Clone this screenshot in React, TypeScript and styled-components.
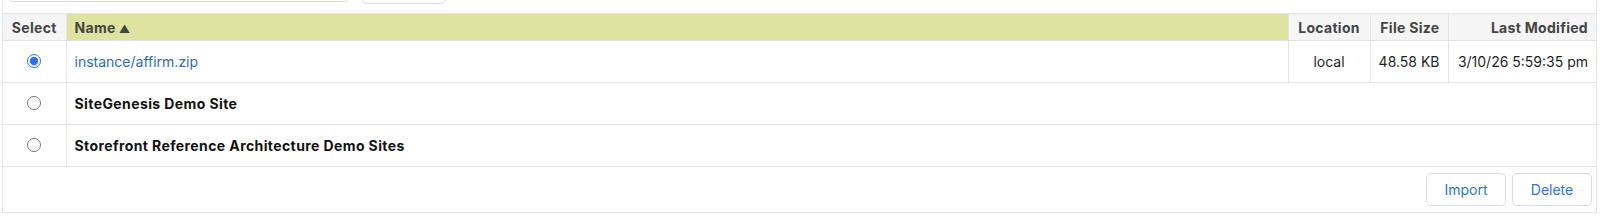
import React, { useState } from 'react'
import styled, { createGlobalStyle } from 'styled-components'

const GlobalStyle = createGlobalStyle`
	body {
		margin: 0;
		background: #fff;
		font-family: Inter, "Liberation Sans", Arial, sans-serif;
		font-size: 14px;
		color: #222;
	}
`

const Panel = styled.div`
	margin: 0 7px 0 2px;
	border: 1px solid #e3e3e3;
	border-top: none;
	background: #fff;
`

const Toolbar = styled.div`
	display: flex;
	align-items: flex-end;
	gap: 11px;
	height: 13px;
	overflow: hidden;
	padding-left: 5px;
`

const Search = styled.div`
	width: 342px;
	height: 28px;
	margin-bottom: 11px;
	border: 1px solid #dcdcdc;
	border-radius: 5px;
	box-sizing: border-box;
	flex: none;
`

const ToolButton = styled.div`
	width: 85px;
	height: 28px;
	margin-bottom: 9px;
	border: 1px solid #dcdcdc;
	border-radius: 5px;
	box-sizing: border-box;
	flex: none;
`

const Table = styled.table`
	width: 100%;
	border-collapse: collapse;
	table-layout: fixed;
`

const Th = styled.th<{ $align?: string; $sorted?: boolean }>`
	height: 26px;
	padding: 0 8px;
	background: ${p => (p.$sorted ? '#dee3a0' : '#f5f5f5')};
	color: #454545;
	font-weight: 700;
	font-size: 14px;
	letter-spacing: 0.3px;
	text-align: ${p => p.$align || 'left'};
	border-top: 1px solid #e3e3e3;
	border-bottom: 1px solid #e3e3e3;
	border-left: 1px solid #e3e3e3;
	white-space: nowrap;
	&:first-child {
		border-left: none;
	}
`

const SortArrow = styled.span`
	font-size: 11px;
	margin-left: 3px;
`

const Td = styled.td<{ $align?: string }>`
	height: 41px;
	padding: 0 8px;
	text-align: ${p => p.$align || 'left'};
	border-bottom: 1px solid #e3e3e3;
	border-left: 1px solid #e3e3e3;
	color: #1f1f1f;
	white-space: nowrap;
	&:first-child {
		border-left: none;
	}
`

const SelectCell = styled(Td)`
	height: 36px;
	text-align: center;
	padding: 0 0 5px;
`

const Radio = styled.input.attrs({ type: 'radio' })`
	margin: 0;
	width: 14px;
	height: 14px;
	accent-color: #2f6fe8;
	vertical-align: middle;
`

const FileLink = styled.a`
	color: #2d6cb0;
	text-decoration: none;
`

const SiteName = styled.span`
	font-weight: 700;
	letter-spacing: 0.4px;
	color: #111;
`

const Footer = styled.div`
	display: flex;
	justify-content: flex-end;
	gap: 6px;
	padding: 6px 4px 6px;
`

const Button = styled.button`
	width: 80px;
	height: 33px;
	background: #fff;
	border: 1px solid #dcdcdc;
	border-radius: 5px;
	color: #2f73d0;
	font-family: Inter, "Liberation Sans", Arial, sans-serif;
	font-size: 14px;
	cursor: pointer;
`

const sites = ['SiteGenesis Demo Site', 'Storefront Reference Architecture Demo Sites']

export default function App() {
	const [selected, setSelected] = useState('file')

	return (
		<>
			<GlobalStyle />
			<Panel>
				<Toolbar>
					<Search />
					<ToolButton />
				</Toolbar>
				<Table>
					<colgroup>
						<col style={{ width: 63 }} />
						<col />
						<col style={{ width: 82 }} />
						<col style={{ width: 78 }} />
						<col style={{ width: 148 }} />
					</colgroup>
					<thead>
						<tr>
							<Th $align="center">Select</Th>
							<Th $sorted>
								Name<SortArrow>▲</SortArrow>
							</Th>
							<Th $align="center">Location</Th>
							<Th $align="right">File Size</Th>
							<Th $align="right">Last Modified</Th>
						</tr>
					</thead>
					<tbody>
						<tr>
							<SelectCell>
								<Radio name="site" checked={selected === 'file'} onChange={() => setSelected('file')} />
							</SelectCell>
							<Td>
								<FileLink href="#">instance/affirm.zip</FileLink>
							</Td>
							<Td $align="center">local</Td>
							<Td $align="right">48.58 KB</Td>
							<Td $align="right">3/10/26 5:59:35 pm</Td>
						</tr>
						{sites.map(s => (
							<tr key={s}>
								<SelectCell>
									<Radio name="site" checked={selected === s} onChange={() => setSelected(s)} />
								</SelectCell>
								<Td colSpan={4}>
									<SiteName>{s}</SiteName>
								</Td>
							</tr>
						))}
					</tbody>
				</Table>
				<Footer>
					<Button>Import</Button>
					<Button>Delete</Button>
				</Footer>
			</Panel>
		</>
	)
}
